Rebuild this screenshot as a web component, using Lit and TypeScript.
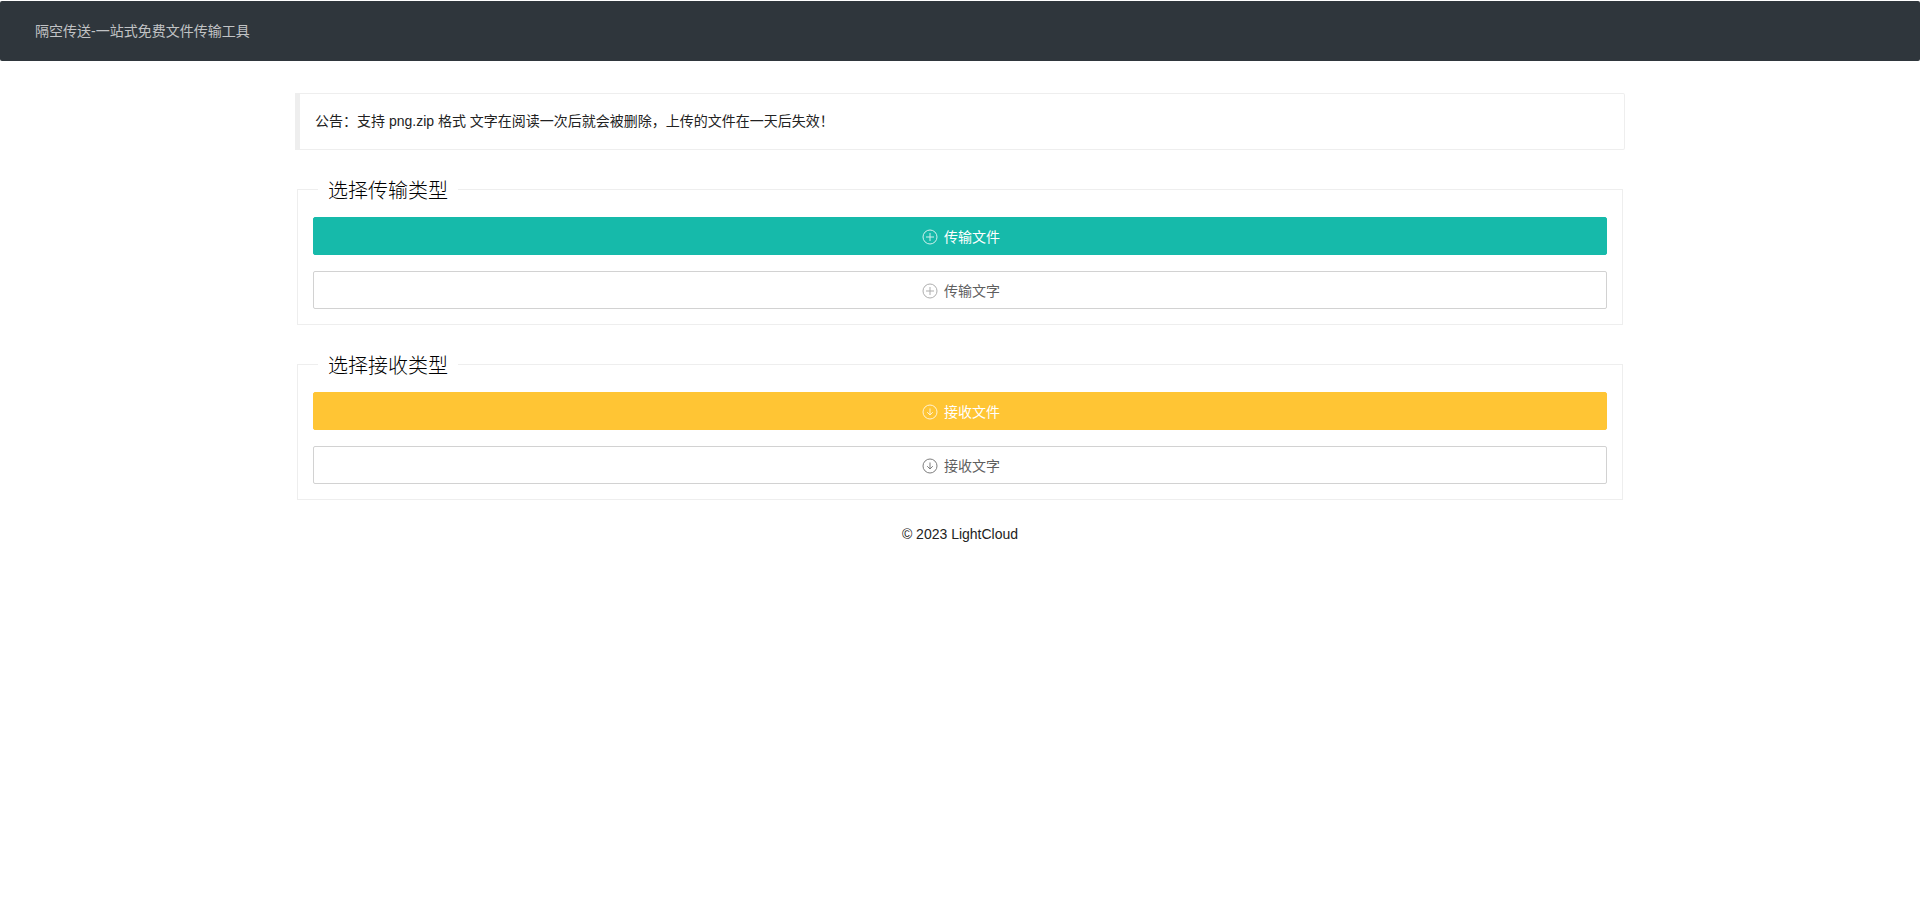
import { LitElement, html, svg, css } from "lit";
import { customElement } from "lit/decorators.js";

const plus = svg`<path d="M8 4v8M4 8h8" />`;
const down = svg`<path d="M8 4.5v6.5M5.2 8.2L8 11l2.8-2.8" />`;

const icon = (glyph: unknown) => html`
  <svg class="icon" viewBox="0 0 16 16" aria-hidden="true">
    <circle cx="8" cy="8" r="7" />
    ${glyph}
  </svg>
`;

const groups = [
  {
    title: "选择传输类型",
    actions: [
      { label: "传输文件", glyph: plus, tone: "teal" },
      { label: "传输文字", glyph: plus, tone: "plain faint" },
    ],
  },
  {
    title: "选择接收类型",
    actions: [
      { label: "接收文件", glyph: down, tone: "amber" },
      { label: "接收文字", glyph: down, tone: "plain" },
    ],
  },
];

@customElement("app-root")
export class AppRoot extends LitElement {
  static styles = css`
    :host {
      display: block;
      font: 14px/24px "Liberation Sans", "Noto Sans CJK SC", sans-serif;
      color: #222;
    }
    .nav {
      display: flex;
      align-items: center;
      height: 60px;
      margin-top: 1px;
      padding: 0 35px;
      border-radius: 2px;
      background: #2f363c;
    }
    .brand {
      color: #c1c3c5;
      text-decoration: none;
    }
    .page {
      padding: 32px 10px;
    }
    .column {
      width: 70%;
      margin: 0 auto;
    }
    .notice {
      margin: 0;
      padding: 15px 15px 16px;
      border: 1px solid #eee;
      border-left-width: 5px;
      border-radius: 0 2px 2px 0;
    }
    .group {
      min-width: 0;
      margin: 24px 2px 0;
      padding: 0;
      border: 1px solid #eee;
    }
    .title {
      margin-left: 20px;
      padding: 4px 10px 0;
      font-size: 20px;
      font-weight: 300;
      line-height: 26px;
      color: #000;
    }
    .actions {
      display: grid;
      gap: 16px;
      padding: 13px 15px 15px;
    }
    .button {
      display: flex;
      align-items: center;
      justify-content: center;
      gap: 6px;
      height: 38px;
      padding: 2px 18px 0 20px;
      border: 1px solid transparent;
      border-radius: 2px;
      font: inherit;
      color: #fff;
      cursor: pointer;
    }
    .teal {
      background: #16baaa;
      border-color: #16baaa;
    }
    .amber {
      background: #ffc534;
      border-color: #ffc534;
    }
    .plain {
      background: #fff;
      border-color: #d2d2d2;
      color: #5f5f5f;
    }
    .icon {
      width: 16px;
      height: 16px;
      fill: none;
      stroke: currentColor;
      opacity: 0.8;
    }
    .faint .icon {
      opacity: 0.5;
    }
    .footer {
      margin-top: 22px;
      text-align: center;
    }
  `;

  render() {
    return html`
      <header class="nav">
        <a class="brand" href="#">隔空传送-一站式免费文件传输工具</a>
      </header>
      <div class="page">
        <main class="column">
          <blockquote class="notice">
            公告：支持 png.zip 格式 文字在阅读一次后就会被删除，上传的文件在一天后失效！
          </blockquote>
          ${groups.map(
            (group) => html`
              <fieldset class="group">
                <legend class="title">${group.title}</legend>
                <div class="actions">
                  ${group.actions.map(
                    (action) => html`
                      <button class="button ${action.tone}" type="button">
                        ${icon(action.glyph)}<span>${action.label}</span>
                      </button>
                    `
                  )}
                </div>
              </fieldset>
            `
          )}
        </main>
        <footer class="footer">© 2023 LightCloud</footer>
      </div>
    `;
  }
}
